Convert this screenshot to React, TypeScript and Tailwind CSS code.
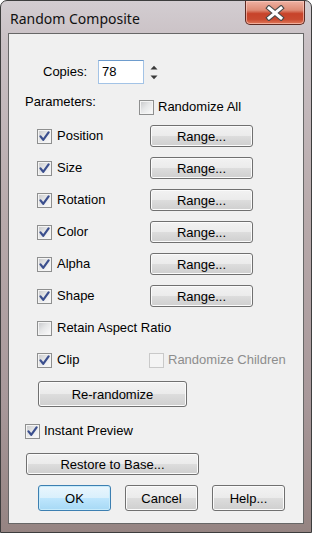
import React from "react";

function Check({ checked, disabled }: { checked?: boolean; disabled?: boolean }) {
  return (
    <span
      className={
        disabled
          ? "flex w-[15px] h-[15px] shrink-0 border border-[#c9c9c9] bg-[#f4f4f4] p-[2px]"
          : "flex w-[15px] h-[15px] shrink-0 border border-[#8e8f8f] bg-[#f4f4f4] p-[1px]"
      }
    >
      <span
        className={
          disabled
            ? "relative block w-full h-full bg-[#f4f4f4]"
            : "relative block w-full h-full bg-[linear-gradient(135deg,#cbccce_0%,#e6e7e8_45%,#f9f9f9_100%)]"
        }
      >
        {checked && (
          <svg width="11" height="11" viewBox="0 0 11 11" className="absolute left-0 top-0">
            <path d="M1.5 5.4 L4.2 8.8 L9.6 1.4" fill="none" stroke="#3b4f8e" strokeWidth="2.2" strokeLinecap="round" strokeLinejoin="round" />
          </svg>
        )}
      </span>
    </span>
  );
}

function Btn({ children, w, h, primary }: { children: React.ReactNode; w: string; h: string; primary?: boolean }) {
  return (
    <div
      className={
        primary
          ? `flex items-center justify-center rounded-[3px] border border-[#3c7fb1] shadow-[inset_0_0_0_1px_#c7ebfb] bg-[linear-gradient(#eaf6fd_0%,#d9f0fc_50%,#bee6fd_50%,#a7d9f5_100%)] ${w} ${h}`
          : `flex items-center justify-center rounded-[3px] border border-[#707070] shadow-[inset_0_0_0_1px_#fbfbfb] bg-[linear-gradient(#f2f2f2_0%,#ebebeb_50%,#dddddd_50%,#cfcfcf_100%)] ${w} ${h}`
      }
    >
      <span className="text-[13px] leading-none text-black">{children}</span>
    </div>
  );
}

function ParamRow({ label }: { label: string }) {
  return (
    <div className="flex h-[32px] items-center pl-[28px]">
      <div className="flex w-[113px] items-center gap-[5px]">
        <Check checked />
        <span className="text-[13px] leading-[16px]">{label}</span>
      </div>
      <Btn w="w-[103px]" h="h-[22px]">Range...</Btn>
    </div>
  );
}

export default function App() {
  return (
    <div className="w-[312px] h-[533px] overflow-hidden bg-white">
      <div className="flex h-[533px] w-[312px] flex-col rounded-t-[7px] border border-[#3d3d3d] bg-[linear-gradient(180deg,#d3cdd1_0%,#c9c0c4_8%,#b8aaab_40%,#a8989a_75%,#958482_100%)] font-['Liberation_Sans',Arial,sans-serif] text-black">
        {/* title bar */}
        <div className="flex h-[32px] shrink-0 items-start justify-between pl-[9px] pr-[6px]">
          <span className="mt-[9px] font-['Noto_Sans',sans-serif] text-[14px] leading-[17px] text-[#111]">Random Composite</span>
          <div className="flex h-[24px] w-[60px] items-center justify-center rounded-b-[5px] border border-t-0 border-[#5e2a22] bg-[linear-gradient(180deg,#eeb2a3_0%,#de8a74_40%,#c7432a_55%,#c94a30_80%,#e07a5c_100%)] shadow-[inset_0_0_0_1px_rgba(255,210,200,0.6)]">
            <svg width="20" height="16" viewBox="0 0 20 16">
              <path d="M4 3 L16 13 M16 3 L4 13" stroke="#4a4a4a" strokeWidth="5.2" strokeLinecap="square" />
              <path d="M4 3 L16 13 M16 3 L4 13" stroke="#ffffff" strokeWidth="3" strokeLinecap="square" />
            </svg>
          </div>
        </div>
        {/* client */}
        <div className="mx-[7px] flex h-[491px] shrink-0 flex-col border border-[#676767] bg-[#f0f0f0]">
          {/* copies */}
          <div className="mt-[22px] flex h-[32px] items-center pl-[34px]">
            <span className="w-[55px] text-[13px] leading-[16px]">Copies:</span>
            <div className="flex h-[24px] w-[46px] items-center border border-[#a3c3e6] border-t-[#6e9ccd] bg-white pl-[3px]">
              <span className="text-[13px] leading-[16px]">78</span>
            </div>
            <div className="flex h-[24px] w-[20px] flex-col items-center justify-center gap-[5px]">
              <svg width="8" height="5" viewBox="0 0 8 5"><path d="M0.5 4.5 L4 0.8 L7.5 4.5 Z" fill="#3a3a3a" /></svg>
              <svg width="8" height="5" viewBox="0 0 8 5"><path d="M0.5 0.5 L4 4.2 L7.5 0.5 Z" fill="#3a3a3a" /></svg>
            </div>
          </div>
          {/* parameters */}
          <div className="flex h-[32px] items-start pl-[16px]">
            <span className="mt-[6px] w-[114px] text-[13px] leading-[16px]">Parameters:</span>
            <div className="mt-[11px] flex items-center gap-[4px]">
              <Check />
              <span className="text-[13px] leading-[16px]">Randomize All</span>
            </div>
          </div>
          <ParamRow label="Position" />
          <ParamRow label="Size" />
          <ParamRow label="Rotation" />
          <ParamRow label="Color" />
          <ParamRow label="Alpha" />
          <ParamRow label="Shape" />
          <div className="flex h-[32px] items-center gap-[5px] pl-[28px]">
            <Check />
            <span className="text-[13px] leading-[16px]">Retain Aspect Ratio</span>
          </div>
          <div className="flex h-[32px] items-center pl-[28px]">
            <div className="flex w-[112px] items-center gap-[5px]">
              <Check checked />
              <span className="text-[13px] leading-[16px]">Clip</span>
            </div>
            <div className="flex items-center gap-[4px]">
              <Check disabled />
              <span className="text-[13px] leading-[16px] text-[#8d8d8d]">Randomize Children</span>
            </div>
          </div>
          <div className="mt-[5px] pl-[29px]">
            <Btn w="w-[149px]" h="h-[26px]">Re-randomize</Btn>
          </div>
          <div className="mt-[8px] flex h-[32px] items-center gap-[4px] pl-[16px]">
            <Check checked />
            <span className="text-[13px] leading-[16px]">Instant Preview</span>
          </div>
          <div className="mt-[6px] pl-[17px]">
            <Btn w="w-[173px]" h="h-[22px]">Restore to Base...</Btn>
          </div>
          <div className="mt-[10px] flex gap-[14px] pl-[29px]">
            <Btn w="w-[73px]" h="h-[26px]" primary>OK</Btn>
            <Btn w="w-[73px]" h="h-[26px]">Cancel</Btn>
            <Btn w="w-[73px]" h="h-[26px]">Help...</Btn>
          </div>
        </div>
      </div>
    </div>
  );
}
